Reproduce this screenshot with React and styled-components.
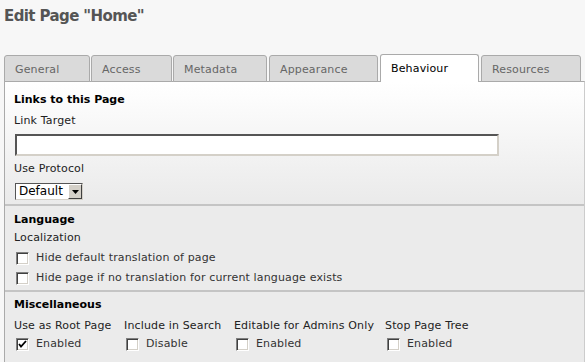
import React from 'react'
import styled, { createGlobalStyle } from 'styled-components'

const GlobalStyle = createGlobalStyle`
  html, body {
    margin: 0;
    padding: 0;
    background: #f7f7f7;
    font-family: "DejaVu Sans", Verdana, sans-serif;
    font-size: 11px;
    letter-spacing: 0.15px;
    color: #333;
  }
`

const Page = styled.div`
  width: 585px;
  height: 362px;
  overflow: hidden;
  padding-left: 4px;
  box-sizing: border-box;
`

const Title = styled.h1`
  margin: 0;
  padding-top: 7px;
  font-size: 15px;
  line-height: 18px;
  font-weight: bold;
  color: #555;
  letter-spacing: -0.6px;
`

const TabBar = styled.div`
  display: flex;
  align-items: flex-end;
  margin-top: 29px;
  height: 28px;
  position: relative;
  z-index: 1;
`

const Tab = styled.div`
  box-sizing: border-box;
  width: ${p => p.$w}px;
  margin-left: ${p => p.$gap}px;
  height: ${p => (p.$active ? 28 : 27)}px;
  padding: 7px 0 0 10px;
  border: 1px solid #aaa;
  border-bottom: ${p => (p.$active ? 'none' : '1px solid #aaa')};
  border-radius: 3px 3px 0 0;
  background: ${p => (p.$active ? '#fff' : '#dadada')};
  color: ${p => (p.$active ? '#000' : '#666')};
  line-height: 14px;
  white-space: nowrap;
`

const Panel = styled.div`
  width: 581px;
  border-left: 1px solid #aaa;
  border-right: 1px solid #ccc;
  border-top: 1px solid #aaa;
  margin-top: -1px;
  box-sizing: border-box;
  height: 300px;
  background: #ebebeb;
`

const Section = styled.div`
  padding: ${p => p.$pad} 0 0 9px;
  height: ${p => p.$h}px;
  box-sizing: border-box;
  border-bottom: ${p => (p.$last ? 'none' : '2px solid #c4c4c4')};
  background: ${p => (p.$gradient ? 'linear-gradient(#fff, #eaeaea)' : '#ebebeb')};
  line-height: 14px;
`

const Heading = styled.div`
  font-weight: bold;
  color: #000;
  height: 14px;
  letter-spacing: 0;
`

const Label = styled.div`
  color: #222;
  margin-top: ${p => p.$mt || 0}px;
  height: 14px;
  white-space: nowrap;
`

const TextInput = styled.div`
  box-sizing: border-box;
  width: 484px;
  height: 22px;
  margin: 6px 0 0 1px;
  background: #fff;
  border-top: 2px solid #555;
  border-left: 2px solid #555;
  border-right: 2px solid #d4d0c8;
  border-bottom: 2px solid #d4d0c8;
`

const Select = styled.div`
  display: flex;
  box-sizing: border-box;
  width: 68px;
  height: 17px;
  margin: 7px 0 0 1px;
  border-top: 1px solid #555;
  border-left: 1px solid #555;
  border-right: 1px solid #d4d0c8;
  border-bottom: 1px solid #d4d0c8;
  background: #fff;
  color: #000;
  font-size: 12px;
  line-height: 15px;
  letter-spacing: 0;
`

const SelectText = styled.span`
  flex: 1;
  padding-left: 3px;
`

const SelectButton = styled.span`
  width: 14px;
  background: #d4d0c8;
  border-left: 1px solid #fff;
  border-top: 1px solid #fff;
  border-right: 1px solid #404040;
  border-bottom: 1px solid #404040;
  box-sizing: border-box;
  display: flex;
  align-items: center;
  justify-content: center;
`

const CheckRow = styled.div`
  display: flex;
  align-items: center;
  height: 14px;
  margin-top: ${p => p.$mt || 0}px;
  color: #333;
  white-space: nowrap;
`

const Box = styled.span`
  box-sizing: border-box;
  width: 13px;
  height: 13px;
  margin: 1px 7px 0 2px;
  background: #fff;
  border-top: 1px solid #808080;
  border-left: 1px solid #808080;
  border-right: 1px solid #fff;
  border-bottom: 1px solid #fff;
  box-shadow: inset 1px 1px 0 #404040, inset -1px -1px 0 #d4d0c8;
  display: flex;
  align-items: center;
  justify-content: center;
  flex: none;
`

const Columns = styled.div`
  display: flex;
  margin-top: 7px;
`

const Column = styled.div`
  width: ${p => p.$w}px;
  flex: none;
`

const Checkbox = ({ checked, children, mt }) => (
  <CheckRow $mt={mt}>
    <Box>
      {checked && (
        <svg width="9" height="9" viewBox="0 0 9 9">
          <path d="M1 4 L3 6.5 L8 1" stroke="#000" strokeWidth="1.8" fill="none" />
        </svg>
      )}
    </Box>
    {children}
  </CheckRow>
)

const tabs = [
  { label: 'General', w: 86, gap: 0 },
  { label: 'Access', w: 81, gap: 1 },
  { label: 'Metadata', w: 94, gap: 1 },
  { label: 'Appearance', w: 109, gap: 2 },
  { label: 'Behaviour', w: 99, gap: 2, active: true },
  { label: 'Resources', w: 100, gap: 2 },
]

const misc = [
  { label: 'Use as Root Page', value: 'Enabled', w: 110, checked: true },
  { label: 'Include in Search', value: 'Disable', w: 110 },
  { label: 'Editable for Admins Only', value: 'Enabled', w: 151 },
  { label: 'Stop Page Tree', value: 'Enabled', w: 150 },
]

export default function App() {
  return (
    <Page>
      <GlobalStyle />
      <Title>Edit Page "Home"</Title>
      <TabBar>
        {tabs.map(t => (
          <Tab key={t.label} $w={t.w} $gap={t.gap} $active={t.active}>
            {t.label}
          </Tab>
        ))}
      </TabBar>
      <Panel>
        <Section $gradient $pad="11px" $h={124}>
          <Heading>Links to this Page</Heading>
          <Label $mt={7}>Link Target</Label>
          <TextInput />
          <Label $mt={6}>Use Protocol</Label>
          <Select>
            <SelectText>Default</SelectText>
            <SelectButton>
              <svg width="7" height="4" viewBox="0 0 7 4">
                <path d="M0 0 L7 0 L3.5 4 Z" fill="#000" />
              </svg>
            </SelectButton>
          </Select>
        </Section>
        <Section $pad="7px" $h={86}>
          <Heading>Language</Heading>
          <Label $mt={4}>Localization</Label>
          <Checkbox mt={6}>Hide default translation of page</Checkbox>
          <Checkbox mt={6}>Hide page if no translation for current language exists</Checkbox>
        </Section>
        <Section $last $pad="6px" $h={80}>
          <Heading>Miscellaneous</Heading>
          <Columns>
            {misc.map(m => (
              <Column key={m.label} $w={m.w}>
                <Label>{m.label}</Label>
                <Checkbox mt={4} checked={m.checked}>{m.value}</Checkbox>
              </Column>
            ))}
          </Columns>
        </Section>
      </Panel>
    </Page>
  )
}
